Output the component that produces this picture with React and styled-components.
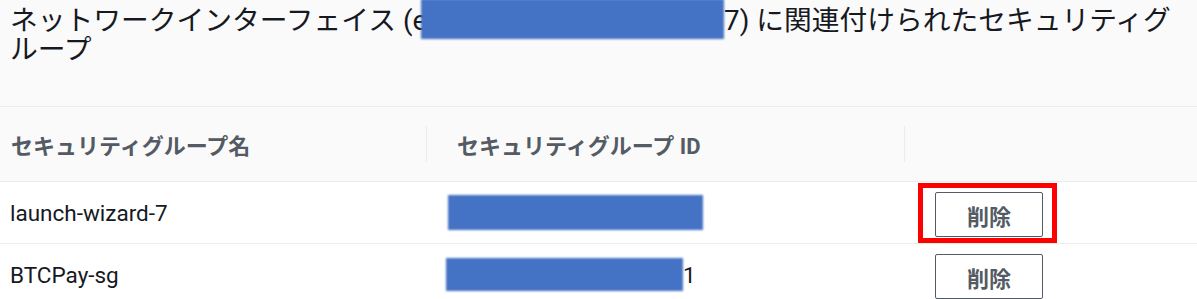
import React from 'react';
import styled, { createGlobalStyle, css } from 'styled-components';

const GlobalStyle = createGlobalStyle`
  html, body { margin: 0; padding: 0; background: #ffffff; }
  body {
    font-family: Roboto, "Noto Sans CJK JP", sans-serif;
    color: #16191f;
  }
`;

const Page = styled.div`
  width: 1197px;
  height: 299px;
  overflow: hidden;
  background: #ffffff;
`;

const TitleBar = styled.div`
  box-sizing: border-box;
  height: 107px;
  padding: 6px 15px 0 10px;
  background: #fafafa;
  border-bottom: 1px solid #eaeded;
`;

const Title = styled.h2`
  margin: 0;
  font-size: 27.75px;
  line-height: 29px;
  font-weight: 400;
  color: #16191f;
`;

const Redact = styled.span`
  display: inline-block;
  flex: none;
  background: #4472c4;
  filter: blur(1px);
  width: ${(p) => p.$w}px;
  height: ${(p) => p.$h}px;
  margin-left: ${(p) => p.$ml || 0}px;
`;

const TitleRedact = styled(Redact)`
  vertical-align: top;
  margin-top: -7px;
  margin-bottom: -4px;
`;

const Row = styled.div`
  display: grid;
  grid-template-columns: 426px 478px 1fr;
  box-sizing: border-box;
  height: ${(p) => p.$h}px;
  background: ${(p) => (p.$head ? '#fafafa' : '#ffffff')};
  border-bottom: 1px solid #eaeded;
`;

const Cell = styled.div`
  display: flex;
  align-items: center;
  min-width: 0;
  padding-left: ${(p) => p.$pl}px;
  font-size: 22.5px;
  color: #16191f;
  white-space: nowrap;
`;

const HeadCell = styled(Cell)`
  font-size: 22px;
  font-weight: 700;
  color: #545b64;
  ${(p) =>
    p.$divider &&
    css`
      &::before {
        content: '';
        width: 1px;
        height: 36px;
        background: #eaeded;
        margin-right: 30px;
        flex: none;
      }
    `}
`;

const ActionCell = styled(Cell)`
  align-items: flex-start;
  padding-top: 10px;
`;

const Highlight = styled.div`
  position: relative;
  display: inline-flex;
  ${(p) =>
    p.$on &&
    css`
      &::after {
        content: '';
        position: absolute;
        top: -9px;
        bottom: -6px;
        left: -17px;
        right: -14px;
        border: 5px solid #ff0000;
        pointer-events: none;
      }
    `}
`;

const Button = styled.button`
  box-sizing: border-box;
  width: 108px;
  height: 45px;
  background: #ffffff;
  border: 1px solid #545b64;
  border-radius: 2px;
  font-family: Roboto, "Noto Sans CJK JP", sans-serif;
  font-size: 22px;
  font-weight: 700;
  color: #545b64;
  padding: 0;
  cursor: pointer;
`;

const rows = [
  { name: 'launch-wizard-7', redact: { w: 255, h: 35, ml: -10 }, tail: '', highlight: true },
  { name: 'BTCPay-sg', redact: { w: 237, h: 33, ml: -12 }, tail: '1', highlight: false },
];

export default function App() {
  return (
    <Page>
      <GlobalStyle />
      <TitleBar>
        <Title>
          ネットワークインターフェイス (e
          <TitleRedact $w={303} $h={40} $ml={-6} />
          7) に関連付けられたセキュリティグループ
        </Title>
      </TitleBar>
      <Row $head $h={75}>
        <HeadCell $pl={11}>セキュリティグループ名</HeadCell>
        <HeadCell $pl={0} $divider>セキュリティグループ ID</HeadCell>
        <HeadCell $pl={0} $divider />
      </Row>
      {rows.map((r) => (
        <Row key={r.name} $h={62}>
          <Cell $pl={10}>{r.name}</Cell>
          <Cell $pl={32}>
            <Redact $w={r.redact.w} $h={r.redact.h} $ml={r.redact.ml} />
            {r.tail}
          </Cell>
          <ActionCell $pl={31}>
            <Highlight $on={r.highlight}>
              <Button>削除</Button>
            </Highlight>
          </ActionCell>
        </Row>
      ))}
    </Page>
  );
}
